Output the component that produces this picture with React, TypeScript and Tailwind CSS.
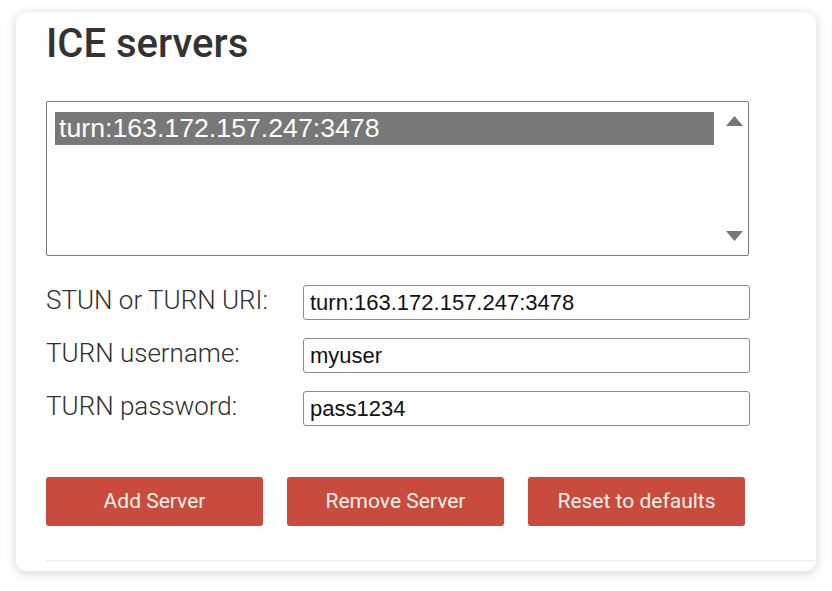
import { useState } from 'react';

const servers = ['turn:163.172.157.247:3478'];

const fields = [
  { label: 'STUN or TURN URI:', value: 'turn:163.172.157.247:3478' },
  { label: 'TURN username:', value: 'myuser' },
  { label: 'TURN password:', value: 'pass1234' },
];

const buttons = ['Add Server', 'Remove Server', 'Reset to defaults'];

export default function App() {
  const [selected, setSelected] = useState(0);

  return (
    <div className="min-h-screen bg-white pt-[12px] pl-[16px] font-['Roboto',sans-serif]">
      <div className="w-[800px] h-[559px] rounded-[10px] bg-white shadow-[0_2px_12px_rgba(0,0,0,0.18)] pl-[30px] pt-[12px] flex flex-col">
        <h1 className="text-[40px] leading-none font-medium text-[#333]">ICE servers</h1>

        {/* server list */}
        <div className="mt-[37px] w-[703px] h-[155px] border border-[#7a7a7a] rounded-[2px] flex">
          <div className="flex-1 pl-[8px] pt-[10px] pr-[6px]">
            {servers.map((s, i) => (
              <div
                key={s}
                onClick={() => setSelected(i)}
                className={`${
                  i === selected ? 'bg-[#787878] text-white' : 'text-[#222]'
                } h-[33px] pl-[4px] flex items-center text-[26.7px] font-['Liberation_Sans',Arial,sans-serif]`}
              >
                {s}
              </div>
            ))}
          </div>
          <div className="w-[28px] flex flex-col items-center justify-between pt-[14px] pb-[14px]">
            <svg width="17" height="10" viewBox="0 0 17 10">
              <path d="M8.5 0L17 10H0z" fill="#777" />
            </svg>
            <svg width="17" height="10" viewBox="0 0 17 10">
              <path d="M0 0h17L8.5 10z" fill="#777" />
            </svg>
          </div>
        </div>

        {/* fields */}
        <div className="mt-[29px] grid grid-cols-[257px_447px] gap-y-[18px]">
          {fields.map((f) => (
            <div key={f.label} className="contents">
              <label className="text-[26px] leading-[31px] font-light text-[#2f2f2f]">{f.label}</label>
              <input
                readOnly
                value={f.value}
                className="h-[35px] border border-[#8a8a8a] rounded-[3px] pl-[6px] text-[22px] text-[#111] font-['Liberation_Sans',Arial,sans-serif] outline-none"
              />
            </div>
          ))}
        </div>

        {/* actions */}
        <div className="mt-[51px] flex gap-[24px]">
          {buttons.map((b) => (
            <button
              key={b}
              className="w-[217px] h-[49px] rounded-[3px] bg-[#c84b3d] text-[21px] text-[#fdf3ea]"
            >
              {b}
            </button>
          ))}
        </div>

        <div className="mt-[34px] border-t border-[#ececec]" />
      </div>
    </div>
  );
}
